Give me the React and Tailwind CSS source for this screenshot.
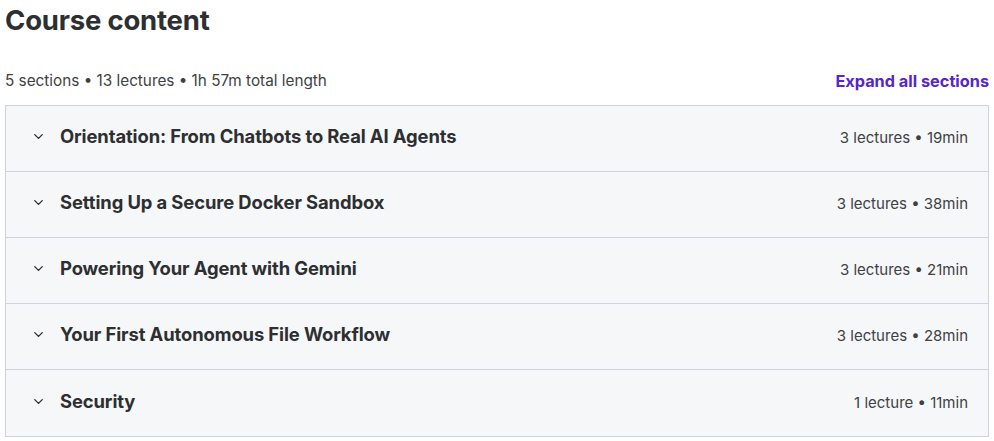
import { ChevronDown } from "lucide-react";

const sections = [
    { title: "Orientation: From Chatbots to Real AI Agents", meta: "3 lectures • 19min" },
    { title: "Setting Up a Secure Docker Sandbox", meta: "3 lectures • 38min" },
    { title: "Powering Your Agent with Gemini", meta: "3 lectures • 21min" },
    { title: "Your First Autonomous File Workflow", meta: "3 lectures • 28min" },
    { title: "Security", meta: "1 lecture • 11min" },
];

export default function App() {
    return (
        <div className="w-[994px] h-[441px] bg-white overflow-hidden text-[#2d2f31]" style={{ fontFamily: "Inter, 'Noto Sans', sans-serif" }}>
            <h2 className="pl-[5px] pt-[2px] text-[27.5px] leading-[36px] font-bold tracking-[-0.2px] text-[#2d2f31]">Course content</h2>

            <div className="flex items-center justify-between pl-[5px] pr-[5px] mt-[31px] h-[24px]">
                <span className="text-[15.3px] text-[#3e4143]">5 sections • 13 lectures • 1h 57m total length</span>
                <button className="text-[16.3px] font-bold text-[#5624d0]">Expand all sections</button>
            </div>

            <div className="mx-[5px] mt-[12px] border border-[#d1d2e0]">
                {sections.map((s, i) => (
                    <div key={i} className={`flex items-center justify-between h-[66px] bg-[#f6f7f9] pl-[25px] pr-[20px] ${i < sections.length - 1 ? 'border-b border-[#d1d2e0]' : ''}`}>
                        <div className="flex items-center gap-[14px] mb-[3px]">
                            <ChevronDown size={15} strokeWidth={2.2} className="text-[#2d2f31]" />
                            <span className="text-[18.4px] font-bold text-[#2d2f31] tracking-[-0.1px]">{s.title}</span>
                        </div>
                        <span className="text-[15px] text-[#3e4143]">{s.meta}</span>
                    </div>
                ))}
            </div>
        </div>
    )
}
